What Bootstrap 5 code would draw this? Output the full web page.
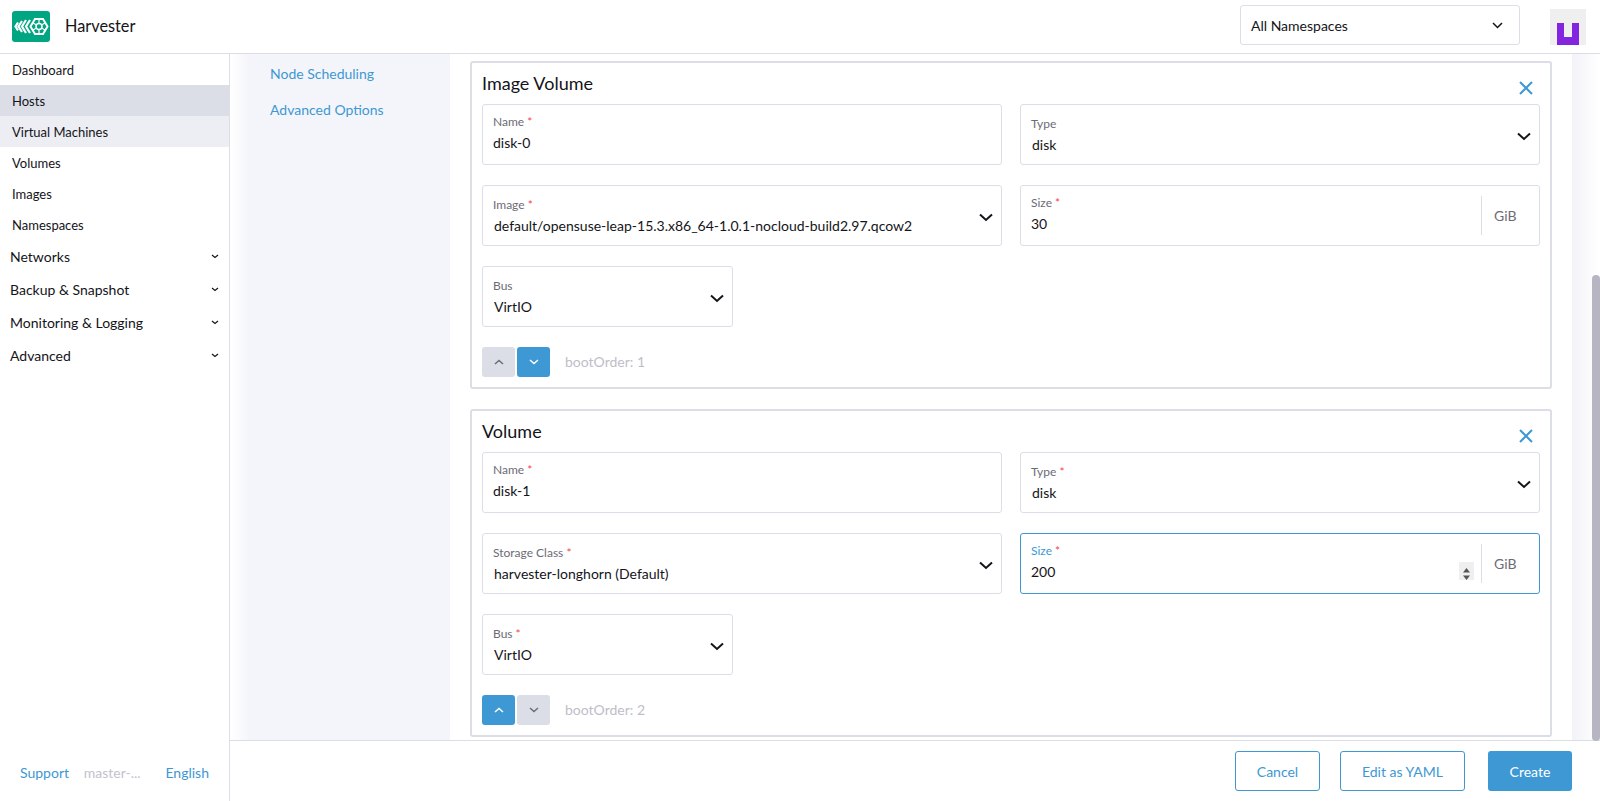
<!DOCTYPE html>
<html lang="en">
<head>
  <meta charset="UTF-8" />
  <meta name="viewport" content="width=device-width, initial-scale=1.0"/>
  <title>Harvester</title>
  <link href="https://cdn.jsdelivr.net/npm/bootstrap@5.3.0/dist/css/bootstrap.min.css" rel="stylesheet"/>
  <style>
    html, body { height: 100%; overflow: hidden; }
    body { font-family: Lato, "Liberation Sans", sans-serif; color: #141419; font-size: 14px; }
    a { text-decoration: none; }

    .app-top { height: 54px; border-bottom: 1px solid #dcdee7; flex: none; }
    .app-logo { width: 38px; height: 31px; margin: 0 15px 0 12px; }
    .app-name { font-size: 16.3px; margin-top: -1px; }
    .ns-picker { width: 280px; height: 40px; margin-right: 30px; margin-top: -3px; border: 1px solid #dcdee7; border-radius: 3px; padding: 0 16px 0 10px; }
    .avatar-box { width: 36px; height: 36px; margin-right: 14px; margin-top: 1px; background: #efefef; }

    .app-body { min-height: 0; }
    .side-menu { width: 230px; flex: none; border-right: 1px solid #dcdee7; }
    .side-link { height: 31px; padding: 2px 0 0 12px; font-size: 13px; color: #141419; display: flex; align-items: center; }
    .side-link.is-active { background: #dcdee7; }
    .side-link.is-parent { background: #edeef3; }
    .side-group { height: 33px; padding: 0 10px 0 10px; font-size: 14px; color: #141419; display: flex; align-items: center; justify-content: space-between; }
    .side-foot { height: 61px; padding: 4px 20px 0; font-size: 14px; }
    .side-foot a { color: #3d98d3; }
    .side-foot span { color: #c4c2cd; margin-right: 10px; }

    .page-col { min-width: 0; position: relative; }
    .page-scroll { min-height: 0; overflow: hidden; }
    .fade-strip { width: 20px; flex: none; background: linear-gradient(to right, #fff, #f4f5fa); }
    .tab-col { width: 200px; flex: none; background: #f4f5fa; padding: 9px 0 0 20px; }
    .tab-link { display: block; color: #3d98d3; font-size: 14px; height: 36px; line-height: 22px; }
    .form-col { padding: 7px 20px 0 20px; background: #fff; min-width: 0; }
    .right-strip { width: 28px; flex: none; background: linear-gradient(to right, #f2f3f8, #fff); }
    .scroll-thumb { position: absolute; right: 0; top: 221px; width: 8px; height: 466px; border-radius: 4px; background: #b6b6c2; }

    .vol-box { border: 2px solid #dcdee7; border-radius: 3px; padding: 9px 10px 0 10px; height: 328px; margin-bottom: 20px; position: relative; flex: none; }
    .vol-title { font-size: 18px; line-height: 22px; margin: 0 0 10px; height: 22px; font-weight: 400; }
    .vol-close { position: absolute; right: 16px; top: 17px; width: 16px; height: 16px; }
    .field-row { display: grid; grid-template-columns: 1fr 1fr; column-gap: 18px; margin-bottom: 20px; }
    .field-box { height: 61px; border: 1px solid #dcdee7; border-radius: 3px; padding: 9px 10px 0; position: relative; background: #fff; }
    .field-box.is-select { padding-top: 11px; }
    .field-box.is-select .field-val { margin-top: 4px; padding-left: 1px; }
    .field-short { width: 251px; margin-bottom: 20px; }
    .field-lbl { font-size: 12px; line-height: 15px; color: #6c6c76; display: block; }
    .field-lbl i { font-style: normal; color: #f64747; }
    .field-val { font-size: 14px; line-height: 20px; margin-top: 4px; display: block; }
    .field-drop { position: absolute; right: 8px; top: 27px; width: 14px; height: 9px; }
    .field-unit { position: absolute; right: 0; top: 10px; height: 39px; width: 58px; border-left: 1px solid #dcdee7; color: #6c6c76; font-size: 14px; padding-left: 12px; display: flex; align-items: center; }
    .field-box.is-focus { border-color: #3d98d3; }
    .field-box.is-focus .field-lbl { color: #3d98d3; }
    .num-spin { position: absolute; right: 65px; top: 28px; width: 15px; height: 18px; background: #efefef; }
    .order-row { display: flex; align-items: center; height: 30px; }
    .order-btn { width: 33px; height: 30px; border: 0; border-radius: 3px; padding: 0; margin-right: 2px; display: flex; align-items: center; justify-content: center; }
    .order-on { background: #3d98d3; color: #fff; }
    .order-off { background: #dcdee7; color: #6c6c76; }
    .order-text { margin: -2px 0 0 13px; color: #bfbdc9; font-size: 14px; }

    .page-foot { height: 61px; flex: none; border-top: 1px solid #dcdee7; padding: 10px 28px 0 0; }
    .foot-btn { height: 40px; border-radius: 3px; font-size: 14px; padding: 0; display: flex; align-items: center; justify-content: center; }
    .foot-line { border: 1px solid #3d98d3; color: #3d98d3; background: #fff; }
    .foot-fill { border: 0; background: #3d98d3; color: #fff; }
    .w-cancel { width: 85px; margin-right: 20px; }
    .w-yaml { width: 125px; margin-right: 23px; }
    .w-create { width: 84px; }
  </style>
</head>
<body class="d-flex flex-column">

  <!-- top bar -->
  <header class="app-top d-flex align-items-center">
    <svg class="app-logo" viewBox="0 0 38 31">
      <rect width="38" height="31" rx="3" fill="#00a582"/>
      <g fill="none" stroke="#fff" stroke-width="2.200">
        <path d="M6 11.500l-2.500 4 2.500 4"/>
        <path d="M10 10l-3.500 5.500L10 21"/>
        <path d="M14 9l-4 6.500 4 6.500"/>
        <path d="M18 9l-4 6.500 4 6.500"/>
      </g>
      <g fill="none" stroke="#fff">
        <path d="M23 8h8l4.500 7.500L31 23h-8l-4.500-7.500z" stroke-width="2"/>
        <circle cx="27" cy="15.500" r="3" stroke-width="1.500"/>
        <path d="M27 8.500v4M27 18.500v4M21 12l3.500 2M33 12l-3.500 2M21 19l3.500-2M33 19l-3.500-2" stroke-width="1.200"/>
      </g>
    </svg>
    <span class="app-name">Harvester</span>
    <div class="ns-picker d-flex align-items-center justify-content-between ms-auto">
      <span>All Namespaces</span>
      <svg width="11" height="7" viewBox="0 0 11 7"><path d="M1 1l4.500 4.500L10 1" fill="none" stroke="#141419" stroke-width="1.500"/></svg>
    </div>
    <div class="avatar-box d-flex align-items-end justify-content-center">
      <svg width="22" height="22" viewBox="0 0 22 22"><path d="M0 0h7v14h8V0h7v22H0z" fill="#8224e0"/></svg>
    </div>
  </header>

  <div class="app-body d-flex flex-grow-1">

    <!-- side menu -->
    <nav class="side-menu d-flex flex-column">
      <a class="side-link" href="#">Dashboard</a>
      <a class="side-link is-active" href="#">Hosts</a>
      <a class="side-link is-parent" href="#">Virtual Machines</a>
      <a class="side-link" href="#">Volumes</a>
      <a class="side-link" href="#">Images</a>
      <a class="side-link" href="#">Namespaces</a>
      <a class="side-group" href="#">Networks <svg width="8" height="5" viewBox="0 0 8 5"><path d="M1 1l3 2.500L7 1" fill="none" stroke="#141419" stroke-width="1.200"/></svg></a>
      <a class="side-group" href="#">Backup &amp; Snapshot <svg width="8" height="5" viewBox="0 0 8 5"><path d="M1 1l3 2.500L7 1" fill="none" stroke="#141419" stroke-width="1.200"/></svg></a>
      <a class="side-group" href="#">Monitoring &amp; Logging <svg width="8" height="5" viewBox="0 0 8 5"><path d="M1 1l3 2.500L7 1" fill="none" stroke="#141419" stroke-width="1.200"/></svg></a>
      <a class="side-group" href="#">Advanced <svg width="8" height="5" viewBox="0 0 8 5"><path d="M1 1l3 2.500L7 1" fill="none" stroke="#141419" stroke-width="1.200"/></svg></a>
      <div class="side-foot mt-auto d-flex align-items-center justify-content-between">
        <a href="#">Support</a>
        <span>master-...</span>
        <a href="#">English</a>
      </div>
    </nav>

    <main class="page-col d-flex flex-column flex-grow-1">
      <div class="page-scroll d-flex flex-grow-1">
        <div class="fade-strip"></div>
        <div class="tab-col">
          <a class="tab-link" href="#">Node Scheduling</a>
          <a class="tab-link" href="#">Advanced Options</a>
        </div>

        <div class="form-col flex-grow-1">
          <!-- first volume -->
          <section class="vol-box">
            <h5 class="vol-title">Image Volume</h5>
            <svg class="vol-close" viewBox="0 0 16 16"><path d="M2 2l12 12M14 2L2 14" stroke="#3d98d3" stroke-width="2" fill="none"/></svg>
            <div class="field-row">
              <div class="field-box"><span class="field-lbl">Name <i>*</i></span><span class="field-val">disk-0</span></div>
              <div class="field-box is-select"><span class="field-lbl">Type</span><span class="field-val">disk</span>
                <svg class="field-drop" viewBox="0 0 14 9"><path d="M1 1.500l6 5.500 6-5.500" fill="none" stroke="#141419" stroke-width="2"/></svg></div>
            </div>
            <div class="field-row">
              <div class="field-box is-select"><span class="field-lbl">Image <i>*</i></span><span class="field-val">default/opensuse-leap-15.3.x86_64-1.0.1-nocloud-build2.97.qcow2</span>
                <svg class="field-drop" viewBox="0 0 14 9"><path d="M1 1.500l6 5.500 6-5.500" fill="none" stroke="#141419" stroke-width="2"/></svg></div>
              <div class="field-box"><span class="field-lbl">Size <i>*</i></span><span class="field-val">30</span><span class="field-unit">GiB</span></div>
            </div>
            <div class="field-box is-select field-short"><span class="field-lbl">Bus</span><span class="field-val">VirtIO</span>
              <svg class="field-drop" viewBox="0 0 14 9"><path d="M1 1.500l6 5.500 6-5.500" fill="none" stroke="#141419" stroke-width="2"/></svg></div>
            <div class="order-row">
              <button class="order-btn order-off"><svg width="10" height="6" viewBox="0 0 10 6"><path d="M1 5l4-3.500L9 5" fill="none" stroke="currentColor" stroke-width="1.500"/></svg></button>
              <button class="order-btn order-on"><svg width="10" height="6" viewBox="0 0 10 6"><path d="M1 1l4 3.500L9 1" fill="none" stroke="currentColor" stroke-width="1.500"/></svg></button>
              <span class="order-text">bootOrder: 1</span>
            </div>
          </section>

          <!-- second volume -->
          <section class="vol-box">
            <h5 class="vol-title">Volume</h5>
            <svg class="vol-close" viewBox="0 0 16 16"><path d="M2 2l12 12M14 2L2 14" stroke="#3d98d3" stroke-width="2" fill="none"/></svg>
            <div class="field-row">
              <div class="field-box"><span class="field-lbl">Name <i>*</i></span><span class="field-val">disk-1</span></div>
              <div class="field-box is-select"><span class="field-lbl">Type <i>*</i></span><span class="field-val">disk</span>
                <svg class="field-drop" viewBox="0 0 14 9"><path d="M1 1.500l6 5.500 6-5.500" fill="none" stroke="#141419" stroke-width="2"/></svg></div>
            </div>
            <div class="field-row">
              <div class="field-box is-select"><span class="field-lbl">Storage Class <i>*</i></span><span class="field-val">harvester-longhorn (Default)</span>
                <svg class="field-drop" viewBox="0 0 14 9"><path d="M1 1.500l6 5.500 6-5.500" fill="none" stroke="#141419" stroke-width="2"/></svg></div>
              <div class="field-box is-focus"><span class="field-lbl">Size <i>*</i></span><span class="field-val">200</span>
                <span class="num-spin"><svg width="15" height="18" viewBox="0 0 15 18"><path d="M7.500 3l3.500 4.500H4zM7.500 15L4 10.500h7z" fill="#555"/></svg></span>
                <span class="field-unit">GiB</span></div>
            </div>
            <div class="field-box is-select field-short"><span class="field-lbl">Bus <i>*</i></span><span class="field-val">VirtIO</span>
              <svg class="field-drop" viewBox="0 0 14 9"><path d="M1 1.500l6 5.500 6-5.500" fill="none" stroke="#141419" stroke-width="2"/></svg></div>
            <div class="order-row">
              <button class="order-btn order-on"><svg width="10" height="6" viewBox="0 0 10 6"><path d="M1 5l4-3.500L9 5" fill="none" stroke="currentColor" stroke-width="1.500"/></svg></button>
              <button class="order-btn order-off"><svg width="10" height="6" viewBox="0 0 10 6"><path d="M1 1l4 3.500L9 1" fill="none" stroke="currentColor" stroke-width="1.500"/></svg></button>
              <span class="order-text">bootOrder: 2</span>
            </div>
          </section>
        </div>

        <div class="right-strip"></div>
      </div>

      <footer class="page-foot d-flex justify-content-end">
        <button class="foot-btn foot-line w-cancel">Cancel</button>
        <button class="foot-btn foot-line w-yaml">Edit as YAML</button>
        <button class="foot-btn foot-fill w-create">Create</button>
      </footer>
      <div class="scroll-thumb"></div>
    </main>
  </div>

  <script src="https://cdn.jsdelivr.net/npm/bootstrap@5.3.0/dist/js/bootstrap.bundle.min.js"></script>
</body>
</html>
